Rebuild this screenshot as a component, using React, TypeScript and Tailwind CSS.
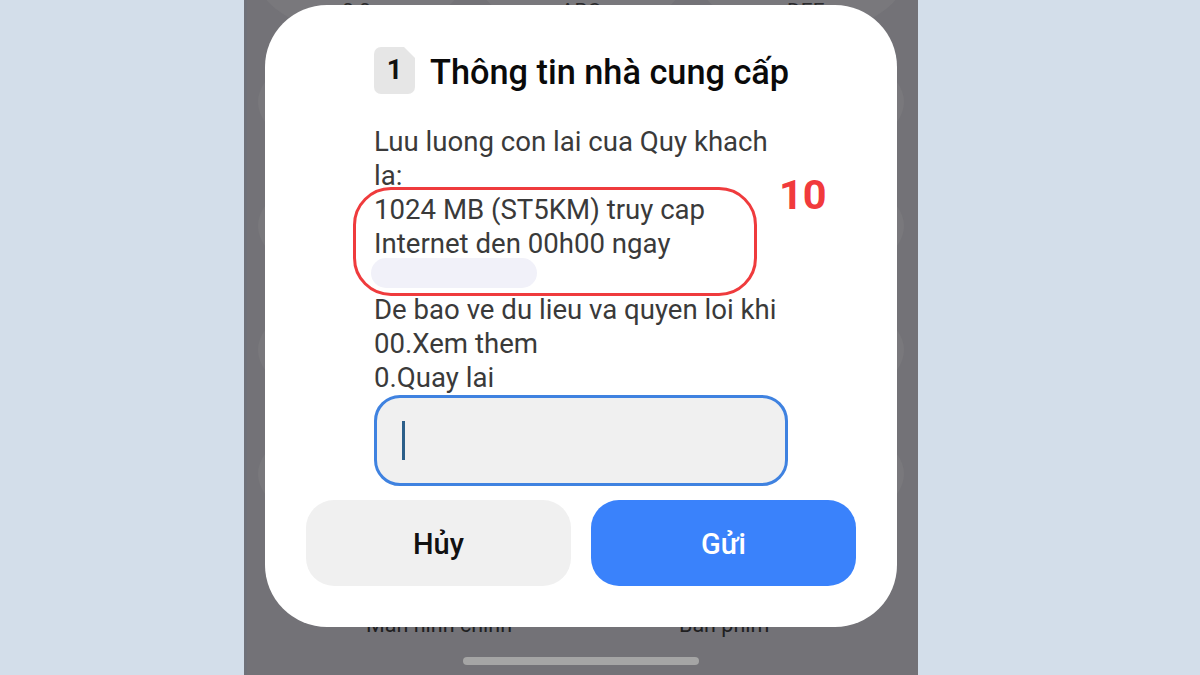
export default function App() {
  const keys = Array.from({ length: 15 }, (_, i) => i);
  const body = "font-['Roboto',sans-serif]";

  return (
    <div className={`flex h-[675px] w-[1200px] overflow-hidden bg-[#d3deea] pl-[244px] ${body}`}>
      <div className="relative h-[675px] w-[674px] overflow-hidden bg-[#737277] shadow-[inset_3px_0_0_#6f7179]">
        {/* keypad behind the dialog */}
        <div className="mt-[-77px] grid grid-cols-3 gap-x-[15px] gap-y-[14px] px-[14px]">
          {keys.map(k => (
            <div key={k} className="h-[110px] rounded-[50%] bg-[#79787c]" />
          ))}
        </div>
        <div className="absolute left-0 top-[-4px] grid w-full grid-cols-3 justify-items-center text-[21px] text-[#2b2b2d]">
          <span>0 0</span>
          <span>ABC</span>
          <span>DEF</span>
        </div>
        <div className="absolute left-0 top-[609px] flex w-full text-[21.5px] text-[#1f1f21]">
          <span className="ml-[122px]">Màn hình chính</span>
          <span className="ml-[167px]">Bàn phím</span>
        </div>
        <div className="absolute bottom-[10px] left-[219px] h-[8px] w-[236px] rounded-full bg-[#a5a5a5]" />

        {/* dialog */}
        <div className="absolute left-[21px] top-[5px] flex h-[622px] w-[632px] flex-col rounded-[62px] bg-white px-[41px] pt-[42px]">
          <div className="flex h-[48px] items-start gap-[15px] pl-[68px]">
            <div className="relative flex h-[47px] w-[41px] shrink-0 items-center justify-center">
              <svg className="absolute inset-0" width="41" height="47" viewBox="0 0 41 47">
                <path d="M7 0H30L41 11V40a7 7 0 0 1-7 7H7a7 7 0 0 1-7-7V7a7 7 0 0 1 7-7z" fill="#e6e6e6" />
              </svg>
              <span className="relative text-[27px] font-bold leading-none text-[#111]">1</span>
            </div>
            <h1 className="mt-[2px] whitespace-nowrap text-[34.3px] font-medium leading-[47px] text-[#0a0a0a]">Thông tin nhà cung cấp</h1>
          </div>

          <div className="relative ml-[68px] mt-[30px] w-[414px] text-[27.6px] leading-[34px] text-[#3a3a3a]">
            <p>Luu luong con lai cua Quy khach</p>
            <p>la:</p>
            <p>1024 MB (ST5KM) truy cap</p>
            <p>Internet den 00h00 ngay</p>
            <div className="ml-[-3px] mt-[-3px] h-[30px] w-[166px] rounded-[15px] bg-[#f1f1f9]" />
            <p className="mt-[5px] whitespace-nowrap">De bao ve du lieu va quyen loi khi</p>
            <p>00.Xem them</p>
            <p>0.Quay lai</p>

            {/* annotation */}
            <div className="absolute left-[-21px] top-[62px] h-[109px] w-[404px] rounded-[38px] border-[3.5px] border-[#ef3b3d]" />
            <span className="absolute left-[405px] top-[49px] text-[41.5px] font-bold leading-none text-[#f13a3c]">10</span>
          </div>

          <div className="ml-[68px] flex h-[91px] w-[414px] items-center rounded-[26px] border-[3px] border-[#3f82e0] bg-[#f0f0f0] pl-[25px]">
            <div className="h-[39px] w-[3px] bg-[#2c5f8a]" />
          </div>

          <div className="mt-[14px] flex gap-[20px]">
            <button className="h-[86px] w-[265px] shrink-0 rounded-[28px] bg-[#f0f0f0] pt-[4px] text-[29px] font-medium text-[#111]">Hủy</button>
            <button className="h-[86px] w-[265px] shrink-0 rounded-[28px] bg-[#3a82fb] pt-[4px] text-[29px] font-medium text-white">Gửi</button>
          </div>
        </div>
      </div>
    </div>
  );
}
